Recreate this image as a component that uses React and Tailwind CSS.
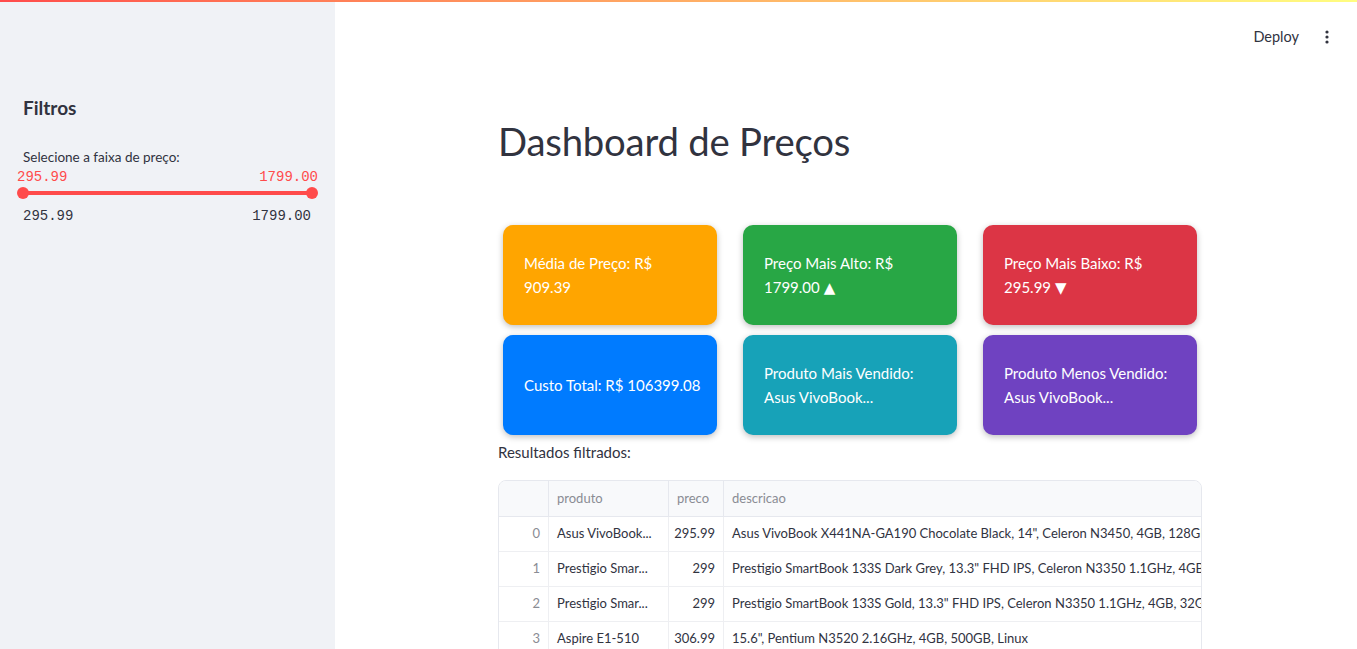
import React from "react";

const cards = [
  { bg: "bg-[#ffa500]", lines: ["Média de Preço: R$", "909.39"] },
  { bg: "bg-[#28a745]", lines: ["Preço Mais Alto: R$", "1799.00"], tri: "▲" },
  { bg: "bg-[#dc3545]", lines: ["Preço Mais Baixo: R$", "295.99"], tri: "▼" },
  { bg: "bg-[#007bff]", lines: ["Custo Total: R$ 106399.08"] },
  { bg: "bg-[#17a2b8]", lines: ["Produto Mais Vendido:", "Asus VivoBook..."] },
  { bg: "bg-[#6f42c1]", lines: ["Produto Menos Vendido:", "Asus VivoBook..."] },
];

const rows = [
  ["0", "Asus VivoBook...", "295.99", "Asus VivoBook X441NA-GA190 Chocolate Black, 14\", Celeron N3450, 4GB, 128GB SSD, Endless OS"],
  ["1", "Prestigio Smar...", "299", "Prestigio SmartBook 133S Dark Grey, 13.3\" FHD IPS, Celeron N3350 1.1GHz, 4GB, 32GB, Windows 10"],
  ["2", "Prestigio Smar...", "299", "Prestigio SmartBook 133S Gold, 13.3\" FHD IPS, Celeron N3350 1.1GHz, 4GB, 32GB, Windows 10"],
  ["3", "Aspire E1-510", "306.99", "15.6\", Pentium N3520 2.16GHz, 4GB, 500GB, Linux"],
];

export default function App() {
  return (
    <div className="relative h-[649px] w-[1357px] overflow-hidden bg-white text-[#31333f] font-['Lato','Noto_Sans',sans-serif]">
      <div className="absolute left-0 top-0 z-10 h-[2px] w-full bg-gradient-to-r from-[#ff4b4b] to-[#fffd80]" />
      <div className="flex h-full">
        {/* Sidebar */}
        <aside className="w-[335px] shrink-0 bg-[#f0f2f6] px-[23px] pt-[96px]">
          <h2 className="text-[19px] font-bold leading-[24px] text-[#31333f]">Filtros</h2>
          <div className="mt-[28px] text-[13.5px] leading-[18px]">Selecione a faixa de preço:</div>
          <div className="relative -mx-[6px] mt-[3px]">
            <div className="flex justify-between font-['Liberation_Mono',monospace] text-[14px] leading-[16px] text-[#ff4b4b]">
              <span>295.99</span>
              <span>1799.00</span>
            </div>
            <div className="relative mx-[6px] mt-[2px] h-[12px]">
              <div className="absolute left-0 right-0 top-[4px] h-[4px] rounded bg-[#ff4b4b]" />
              <div className="absolute -left-[6px] top-0 h-[12px] w-[12px] rounded-full bg-[#ff4b4b]" />
              <div className="absolute -right-[6px] top-0 h-[12px] w-[12px] rounded-full bg-[#ff4b4b]" />
            </div>
          </div>
          <div className="mt-[9px] flex justify-between pr-[1px] font-['Liberation_Mono',monospace] text-[14px] leading-[16px] text-[#31333f]">
            <span>295.99</span>
            <span>1799.00</span>
          </div>
        </aside>

        {/* Main */}
        <main className="relative flex-1">
          <div className="flex h-[74px] items-center justify-end pr-[22px]">
            <span className="text-[14.5px] text-[#31333f]">Deploy</span>
            <svg className="ml-[20px]" width="16" height="16" viewBox="0 0 16 16">
              <circle cx="8" cy="3" r="1.6" fill="#31333f" />
              <circle cx="8" cy="8" r="1.6" fill="#31333f" />
              <circle cx="8" cy="13" r="1.6" fill="#31333f" />
            </svg>
          </div>
          <div className="ml-[163px] w-[704px]">
            <h1 className="mt-[41px] text-[38.3px] font-normal leading-[52px] tracking-[-0.2px] text-[#31333f]">Dashboard de Preços</h1>
            <div className="mt-[53px] grid grid-cols-3 gap-x-[16px]">
              {cards.map((c, i) => (
                <div
                  key={i}
                  className={`${c.bg} m-[5px] flex h-[100px] flex-col justify-center rounded-[10px] px-[21px] text-[15px] leading-[24px] text-white shadow-[0_2px_6px_rgba(0,0,0,0.25)]`}
                >
                  {c.lines.map((l, j) => (
                    <div key={j} className="whitespace-nowrap">
                      {l}
                      {j === 1 && c.tri ? (
                        <span className="ml-[4px] font-['DejaVu_Sans',sans-serif] text-[15px]">{c.tri}</span>
                      ) : null}
                    </div>
                  ))}
                </div>
              ))}
            </div>
            <div className="mt-0 text-[15px] leading-[24px]">Resultados filtrados:</div>
            <div className="mt-[16px] overflow-hidden rounded-t-[8px] border border-[#e6e8ee] text-[13px]">
              <div className="flex h-[36px] items-center border-b border-[#e6e8ee] bg-[#f8f9fb] text-[#8a8c94]">
                <div className="h-full w-[50px] border-r border-[#e6e8ee]" />
                <div className="flex h-full w-[120px] items-center border-r border-[#e6e8ee] px-[8px]">produto</div>
                <div className="flex h-full w-[55px] items-center border-r border-[#e6e8ee] px-[8px]">preco</div>
                <div className="flex h-full flex-1 items-center px-[8px]">descricao</div>
              </div>
              {rows.map((r, i) => (
                <div key={i} className="flex h-[35px] items-center border-b border-[#eeeff2]">
                  <div className="flex h-full w-[50px] items-center justify-end border-r border-[#eeeff2] px-[8px] text-[#8a8c94]">{r[0]}</div>
                  <div className="flex h-full w-[120px] items-center whitespace-nowrap border-r border-[#eeeff2] px-[8px]">{r[1]}</div>
                  <div className="flex h-full w-[55px] items-center justify-end border-r border-[#eeeff2] px-[8px]">{r[2]}</div>
                  <div className="flex h-full min-w-0 flex-1 items-center overflow-hidden whitespace-nowrap px-[8px]">{r[3]}</div>
                </div>
              ))}
            </div>
          </div>
        </main>
      </div>
    </div>
  );
}
